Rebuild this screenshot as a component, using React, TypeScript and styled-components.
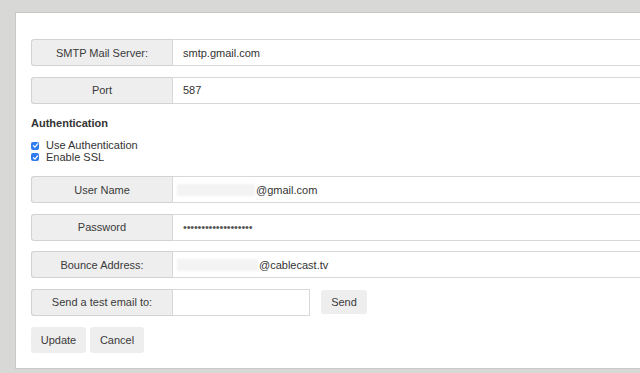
import styled, { createGlobalStyle } from "styled-components";

const GlobalStyle = createGlobalStyle`
  html, body {
    margin: 0;
    padding: 0;
    background: #d8d8d6;
    overflow: hidden;
  }
  body {
    font-family: "Liberation Sans", Arial, Helvetica, sans-serif;
    color: #333;
  }
`;

const Page = styled.div`
  padding: 12px 0 0 15px;
  height: 373px;
  box-sizing: border-box;
  overflow: hidden;
`;

const Panel = styled.div`
  width: 700px;
  background: #fff;
  border: 1px solid #c8c8c8;
  border-right: none;
  padding: 26px 15px 15px 15px;
  box-sizing: border-box;
`;

const Row = styled.div<{ $grow?: boolean }>`
  display: flex;
  align-items: center;
  height: 27px;
  margin-bottom: 10.5px;
  width: ${(p) => (p.$grow ? "auto" : "fit-content")};
`;

const Group = styled.div<{ $width?: number }>`
  display: flex;
  height: 27px;
  flex: ${(p) => (p.$width ? "none" : "1")};
  width: ${(p) => (p.$width ? `${p.$width}px` : "auto")};
`;

const Label = styled.div`
  width: 141px;
  flex: none;
  box-sizing: border-box;
  background: #eee;
  border: 1px solid #d2d2d2;
  border-right: none;
  border-radius: 3px 0 0 3px;
  display: flex;
  align-items: center;
  justify-content: center;
  font-size: 11px;
  color: #3a3a3a;
`;

const Field = styled.div`
  flex: 1;
  box-sizing: border-box;
  border: 1px solid #d8d8d8;
  display: flex;
  align-items: center;
  padding-left: 10px;
  font-size: 11px;
  color: #333;
  white-space: nowrap;
`;

const TestInput = styled.input`
  flex: 1;
  min-width: 0;
  box-sizing: border-box;
  border: 1px solid #d8d8d8;
  outline: none;
  padding: 0 10px;
  font: inherit;
  font-size: 11px;
`;

const Redacted = styled.span<{ $w: number }>`
  display: inline-block;
  width: ${(p) => p.$w}px;
  height: 12px;
  background: #f3f3f3;
  filter: blur(0.8px);
  margin-left: -6px;
  margin-right: 1px;
`;

const Dots = styled.span`
  font-size: 11px;
  letter-spacing: -0.2px;
  color: #555;
`;

const Heading = styled.div`
  font-size: 11px;
  font-weight: bold;
  line-height: 14px;
  padding-top: 2px;
  margin-bottom: 10px;
  color: #333;
`;

const CheckList = styled.div`
  margin-bottom: 13px;
`;

const CheckRow = styled.div`
  display: flex;
  align-items: center;
  gap: 7px;
  font-size: 11px;
  line-height: 11.5px;
  color: #333;
`;

const Box = styled.span`
  width: 8px;
  height: 8px;
  border-radius: 2px;
  background: #2f7cf0;
  display: inline-flex;
  align-items: center;
  justify-content: center;
  flex: none;
`;

const Button = styled.button<{ $w: number; $h?: number }>`
  width: ${(p) => p.$w}px;
  height: ${(p) => p.$h ?? 26}px;
  border: none;
  border-radius: 3px;
  background: #eee;
  color: #3a3a3a;
  font-family: inherit;
  font-size: 11px;
  padding: 0;
`;

const SendButton = styled(Button)`
  margin-left: 11px;
`;

const Actions = styled.div`
  display: flex;
  gap: 4px;
  margin-top: 11px;
`;

function Check({ label }: { label: string }) {
  return (
    <CheckRow>
      <Box>
        <svg width="7" height="7" viewBox="0 0 10 10">
          <path d="M2 5.2 L4.2 7.4 L8 2.8" fill="none" stroke="#fff" strokeWidth="1.8" strokeLinecap="round" strokeLinejoin="round" />
        </svg>
      </Box>
      {label}
    </CheckRow>
  );
}

export default function App() {
  return (
    <>
      <GlobalStyle />
      <Page>
        <Panel>
          <Row $grow>
            <Group>
              <Label>SMTP Mail Server:</Label>
              <Field>smtp.gmail.com</Field>
            </Group>
          </Row>
          <Row $grow>
            <Group>
              <Label>Port</Label>
              <Field>587</Field>
            </Group>
          </Row>

          <Heading>Authentication</Heading>
          <CheckList>
            <Check label="Use Authentication" />
            <Check label="Enable SSL" />
          </CheckList>

          <Row $grow>
            <Group>
              <Label>User Name</Label>
              <Field>
                <Redacted $w={78} />
                @gmail.com
              </Field>
            </Group>
          </Row>
          <Row $grow>
            <Group>
              <Label>Password</Label>
              <Field>
                <Dots>•••••••••••••••••••</Dots>
              </Field>
            </Group>
          </Row>
          <Row $grow>
            <Group>
              <Label>Bounce Address:</Label>
              <Field>
                <Redacted $w={81} />
                @cablecast.tv
              </Field>
            </Group>
          </Row>
          <Row>
            <Group $width={279}>
              <Label>Send a test email to:</Label>
              <TestInput type="text" />
            </Group>
            <SendButton $w={46} $h={24}>Send</SendButton>
          </Row>

          <Actions>
            <Button $w={55}>Update</Button>
            <Button $w={54}>Cancel</Button>
          </Actions>
        </Panel>
      </Page>
    </>
  );
}
